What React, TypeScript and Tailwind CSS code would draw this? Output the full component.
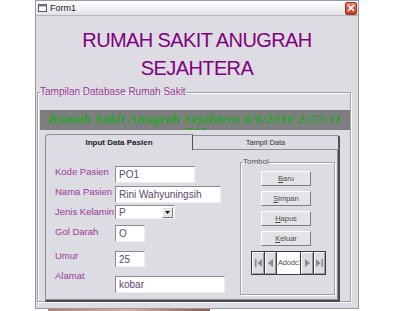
import React from 'react';

// Form1 - VB6 style hospital patient form
const labelCls = "font-['Liberation_Sans',Arial,sans-serif] text-[9.5px] text-[#9a3a9a] w-[60px] shrink-0 whitespace-nowrap";
const inputCls =
  "bg-white border border-t-[#8a8a92] border-l-[#8a8a92] border-r-[#eeeef2] border-b-[#eeeef2] pl-[3px] flex items-center font-['Liberation_Sans',Arial,sans-serif] text-[10px] text-[#5a4868] whitespace-nowrap overflow-hidden";
const btnCls =
  "w-[50px] h-[15px] bg-[#e4e4e8] border border-t-white border-l-white border-r-[#7c7c84] border-b-[#7c7c84] flex items-center justify-center font-['Liberation_Sans',Arial,sans-serif] text-[7.5px] text-[#4a4a4a]";

const NavBtn = ({ children, className }: { children: React.ReactNode; className: string }) => (
  <div
    className={`${className} h-full bg-[#dcdce2] border-r border-[#3c3c3c] shadow-[inset_1px_1px_0_#fff,inset_-1px_-1px_0_#9a9aa2] flex items-center justify-center`}
  >
    {children}
  </div>
);

const Btn = ({ u, rest }: { u: string; rest: string }) => (
  <div className={btnCls}>
    <span>
      <span className="underline">{u}</span>
      {rest}
    </span>
  </div>
);

export default function App() {
  return (
    <div className="w-[400px] h-[311px] bg-white overflow-hidden">
      <div className="ml-[35px] w-[324px] h-[309px] bg-[#dcdce2] border border-[#9a9aa4] flex flex-col">
        {/* title bar */}
        <div className="h-[15px] shrink-0 bg-gradient-to-b from-white to-[#e2e2e8] border-b border-[#b4b4bc] flex items-center pl-[2px]">
          <svg width="9" height="8" viewBox="0 0 9 8" className="mr-[3px]">
            <rect x="0.5" y="0.5" width="8" height="7" fill="#fff" stroke="#555" />
            <rect x="0.5" y="0.5" width="8" height="2" fill="#6a7a9a" />
          </svg>
          <span className="font-['Liberation_Sans',Arial,sans-serif] text-[9px] text-[#222] leading-none">Form1</span>
          <div className="ml-auto mr-[1px] w-[12px] h-[13px] rounded-[2px] bg-gradient-to-b from-[#e8806a] to-[#c03a20] border border-[#9a3020] flex items-center justify-center">
            <svg width="8" height="8" viewBox="0 0 8 8">
              <path d="M1 1 L7 7 M7 1 L1 7" stroke="#fff" strokeWidth="1.6" />
            </svg>
          </div>
        </div>

        {/* heading */}
        <div className="pt-[10px] text-center font-['Liberation_Sans',Arial,sans-serif] text-[20px] leading-[28px] tracking-[-0.6px] text-[#800080]">
          <div>RUMAH SAKIT ANUGRAH</div>
          <div>SEJAHTERA</div>
        </div>

        {/* database frame */}
        <fieldset className="mt-[4px] ml-[1px] w-[314px] h-[216px] border border-[#a0a0a8] shadow-[inset_1px_1px_0_#fff,1px_1px_0_#fff]">
          <legend className="ml-[2px] font-['Liberation_Sans',Arial,sans-serif] text-[10px] leading-[12px] text-[#9a3a9a]">
            Tampilan Database Rumah Sakit
          </legend>

          <div className="mt-[12px] ml-[2px] w-[310px] h-[20px] bg-[#7e7e80] overflow-hidden text-center pt-[2px] font-['Liberation_Serif',serif] italic font-bold text-[13.5px] leading-[13px] tracking-[0.3px] text-[#22a822]">
            Rumah Sakit Anugrah Sejahtera 6/8/2010 2:57:11
            <br />
            PM
          </div>

          {/* tab control */}
          <div className="mt-[4px] ml-[7px] w-[295px] flex flex-col">
            <div className="flex h-[15px] items-end">
              <div className="relative z-10 w-[148px] h-[16px] -mb-[1px] bg-[#dcdce2] border-l border-t border-r border-l-[#8e8e96] border-t-[#8e8e96] border-r-[#505050] rounded-tl-[4px] flex items-center justify-center font-['Liberation_Sans',Arial,sans-serif] text-[8px] font-bold text-[#222]">
                Input Data Pasien
              </div>
              <div className="w-[147px] h-[14px] bg-[#dcdce2] border-t border-r-2 border-t-[#8e8e96] border-r-[#505050] rounded-tr-[3px] flex items-center justify-center font-['Liberation_Sans',Arial,sans-serif] text-[7.5px] text-[#333]">
                Tampil Data
              </div>
            </div>

            <div className="h-[153px] border-l border-t border-r-2 border-b-2 border-l-[#8e8e96] border-t-[#8e8e96] border-r-[#4a4a4a] border-b-[#4a4a4a] shadow-[inset_-1px_-1px_0_#8a8a92] flex pl-[9px]">
              {/* form fields */}
              <div className="w-[185px] mt-[16px] flex flex-col">
                <div className="flex items-start h-[17px]">
                  <div className={`${labelCls} leading-[12px]`}>Kode Pasien</div>
                  <div className={`${inputCls} w-[80px] h-[17px]`}>PO1</div>
                </div>
                <div className="flex items-start h-[17px] mt-[3px]">
                  <div className={`${labelCls} leading-[12px]`}>Nama Pasien</div>
                  <div className={`${inputCls} w-[106px] h-[17px]`}>Rini Wahyuningsih</div>
                </div>
                <div className="flex items-start h-[14px] mt-[2px]">
                  <div className={`${labelCls} leading-[14px]`}>Jenis Kelamin</div>
                  <div className={`${inputCls} w-[60px] h-[14px] pr-[1px]`}>
                    <span className="flex-1">P</span>
                    <div className="w-[11px] h-[11px] bg-[#e4e4e8] border border-t-white border-l-white border-r-[#7c7c84] border-b-[#7c7c84] flex items-center justify-center">
                      <svg width="5" height="3" viewBox="0 0 5 3">
                        <path d="M0 0 H5 L2.5 3 Z" fill="#111" />
                      </svg>
                    </div>
                  </div>
                </div>
                <div className="flex items-start h-[17px] mt-[6px]">
                  <div className={`${labelCls} leading-[14px]`}>Gol Darah</div>
                  <div className={`${inputCls} w-[30px] h-[17px]`}>O</div>
                </div>
                <div className="flex items-start h-[16px] mt-[9px]">
                  <div className={`${labelCls} leading-[10px]`}>Umur</div>
                  <div className={`${inputCls} w-[30px] h-[16px]`}>25</div>
                </div>
                <div className="flex items-start h-[23px] mt-[3px]">
                  <div className={`${labelCls} leading-[12px]`}>Alamat</div>
                  <div className={`${inputCls} w-[110px] h-[17px] mt-[6px]`}>kobar</div>
                </div>
              </div>

              {/* Tombol frame */}
              <fieldset className="mt-[7px] w-[95px] h-[138px] border border-[#a0a0a8] shadow-[inset_1px_1px_0_#fff,1px_1px_0_#fff] flex flex-col">
                <legend className="ml-[2px] font-['Liberation_Sans',Arial,sans-serif] text-[8px] leading-[10px] text-[#505050]">
                  Tombol
                </legend>
                <div className="ml-[20px] mt-[4px] flex flex-col gap-[5px]">
                  <Btn u="B" rest="aru" />
                  <Btn u="S" rest="impan" />
                  <Btn u="H" rest="apus" />
                  <Btn u="K" rest="eluar" />
                </div>
                <div className="ml-[10px] mt-[5px] w-[75px] h-[24px] border-l border-t border-b border-[#3c3c3c] flex">
                  <NavBtn className="w-[13px]">
                    <svg width="7" height="8" viewBox="0 0 7 8">
                      <rect x="0" y="0" width="1.5" height="8" fill="#8a8a92" />
                      <path d="M7 0 V8 L2.5 4 Z" fill="#8a8a92" />
                    </svg>
                  </NavBtn>
                  <NavBtn className="w-[12px]">
                    <svg width="5" height="8" viewBox="0 0 5 8">
                      <path d="M5 0 V8 L0 4 Z" fill="#8a8a92" />
                    </svg>
                  </NavBtn>
                  <div className="w-[24px] h-full bg-white border-r border-[#3c3c3c] overflow-hidden flex items-center pl-[1px] font-['Liberation_Sans',Arial,sans-serif] text-[7.5px] tracking-[-0.2px] text-[#555] whitespace-nowrap">
                    Adodc1
                  </div>
                  <NavBtn className="w-[13px]">
                    <svg width="5" height="8" viewBox="0 0 5 8">
                      <path d="M0 0 V8 L5 4 Z" fill="#8a8a92" />
                    </svg>
                  </NavBtn>
                  <NavBtn className="w-[12px]">
                    <svg width="7" height="8" viewBox="0 0 7 8">
                      <path d="M0 0 V8 L4.5 4 Z" fill="#8a8a92" />
                      <rect x="5.5" y="0" width="1.5" height="8" fill="#8a8a92" />
                    </svg>
                  </NavBtn>
                </div>
              </fieldset>
            </div>
          </div>
        </fieldset>
      </div>
      <div className="ml-[48px] w-[162px] h-[2px] bg-gradient-to-r from-[#b08070] via-[#d8b0a0] to-[#8a5a50]" />
    </div>
  );
}
